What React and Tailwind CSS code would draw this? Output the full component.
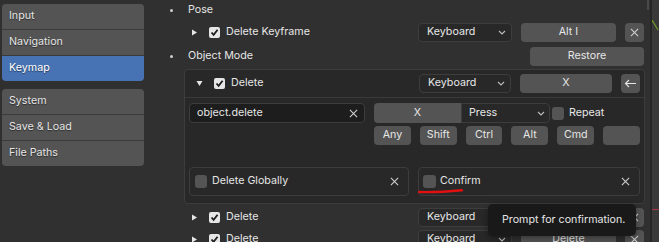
import React from 'react';

const Cross = ({ size = 9 }) => (
  <svg width={size} height={size} viewBox="0 0 10 10" className="shrink-0">
    <path d="M1 1 L9 9 M9 1 L1 9" stroke="#d0d0d0" strokeWidth="1.2" fill="none" />
  </svg>
);

const Chevron = () => (
  <svg width="8" height="5" viewBox="0 0 8 5" className="shrink-0">
    <path d="M1 1 L4 4 L7 1" stroke="#bdbdbd" strokeWidth="1.1" fill="none" />
  </svg>
);

const Check = () => (
  <div className="w-[11px] h-[11px] rounded-[2px] bg-[#e6e6e6] flex items-center justify-center shrink-0">
    <svg width="9" height="9" viewBox="0 0 9 9">
      <path d="M1.5 4.5 L3.6 6.8 L7.6 1.8" stroke="#1c1c1c" strokeWidth="1.8" fill="none" />
    </svg>
  </div>
);

const Tri = ({ down }) => (
  <svg width="7" height="7" viewBox="0 0 7 7" className="shrink-0">
    {down ? <path d="M0.5 1 L6.5 1 L3.5 6 Z" fill="#e6e6e6" /> : <path d="M1 0.5 L6 3.5 L1 6.5 Z" fill="#e6e6e6" />}
  </svg>
);

const Btn = ({ w, children, className = '' }) => (
  <div className={`h-[19px] rounded-[4px] bg-[#545454] flex items-center justify-center shrink-0 ${className}`} style={{ width: w }}>{children}</div>
);

const Menu = ({ w, label }) => (
  <div className="h-[19px] rounded-[4px] bg-[#282828] border border-[#3d3d3d] flex items-center justify-between pl-[8px] pr-[5px] shrink-0" style={{ width: w }}>
    <span>{label}</span><Chevron />
  </div>
);

const Dot = () => <div className="w-[3px] h-[3px] rounded-full bg-[#cfcfcf] ml-[10px] mr-[15px] shrink-0" />;

const ItemRow = ({ label, mid, className = '' }) => (
  <div className={`h-[20px] shrink-0 flex items-center ${className}`}>
    <div className="flex-1 flex items-center pl-[31px]">
      <Tri />
      <div className="ml-[11px]"><Check /></div>
      <span className="ml-[6px]">{label}</span>
    </div>
    <Menu w={94} label="Keyboard" />
    <Btn w={95} className="ml-[9px]">{mid}</Btn>
    <Btn w={19} className="ml-[9px]"><Cross /></Btn>
  </div>
);

const side1 = ['Input', 'Navigation', 'Keymap'];
const side2 = ['System', 'Save & Load', 'File Paths'];

const SideGroup = ({ items, active }) => (
  <div className="w-[142px] rounded-[4px] overflow-hidden flex flex-col gap-[1px] bg-[#3a3a3a]">
    {items.map(t => (
      <div key={t} className={`h-[25px] flex items-center pl-[7px] [text-shadow:0_1px_1px_rgba(0,0,0,0.5)] ${t === active ? 'bg-[#4772b3] text-white' : 'bg-[#545454]'}`}>{t}</div>
    ))}
  </div>
);

export default function App() {
  return (
    <div className="w-[659px] h-[242px] overflow-hidden bg-[#303030] flex relative text-[10.7px] leading-none text-[#e6e6e6] font-['Inter','DejaVu_Sans',sans-serif]">
      <div className="w-[160px] pl-[2px] pt-[4px] flex flex-col gap-[8px] shrink-0">
        <SideGroup items={side1} active="Keymap" />
        <SideGroup items={side2} />
      </div>

      <div className="w-[485px] shrink-0 flex flex-col">
        <div className="h-[20px] shrink-0 flex items-center pr-[1px]"><Dot /><span>Pose</span></div>
        <ItemRow label="Delete Keyframe" mid="Alt I" className="mt-[2px] pr-[1px]" />
        <div className="h-[19px] shrink-0 mt-[5px] flex items-center pr-[1px]">
          <Dot /><span className="flex-1">Object Mode</span>
          <Btn w={114}>Restore</Btn>
        </div>

        <div className="shrink-0 mt-[3px] ml-[24px] w-[461px] h-[135px] rounded-[4px] border border-[#3d3d3d] bg-[#282828] flex flex-col">
          <div className="h-[28px] shrink-0 border-b border-[#3a3a3a] flex items-center pr-[4px]">
            <div className="flex-1 flex items-center pl-[11px]">
              <Tri down />
              <div className="ml-[11px]"><Check /></div>
              <span className="ml-[6px]">Delete</span>
            </div>
            <Menu w={92} label="Keyboard" />
            <Btn w={92} className="ml-[9px]">X</Btn>
            <Btn w={19} className="ml-[9px]">
              <svg width="13" height="9" viewBox="0 0 13 9"><path d="M12 4.5 H1.5 M5 1 L1.5 4.5 L5 8" stroke="#e6e6e6" strokeWidth="1.1" fill="none" /></svg>
            </Btn>
          </div>

          <div className="flex-1 px-[4px] pt-[5px] flex flex-col">
            <div className="flex gap-[9px]">
              <div className="w-[176px] h-[20px] rounded-[4px] bg-[#1d1d1d] border border-[#3d3d3d] flex items-center justify-between pl-[7px] pr-[6px]">
                <span>object.delete</span><Cross />
              </div>
              <div className="flex-1 flex flex-col gap-[3px]">
                <div className="h-[20px] flex items-center">
                  <div className="w-[176px] h-[20px] flex rounded-[4px] overflow-hidden">
                    <div className="w-[87px] bg-[#545454] flex items-center justify-center">X</div>
                    <div className="flex-1 bg-[#282828] border border-[#3d3d3d] rounded-r-[4px] flex items-center justify-between pl-[7px] pr-[4px]">
                      <span>Press</span><Chevron />
                    </div>
                  </div>
                  <div className="ml-[2px] w-[12px] h-[13px] rounded-[3px] bg-[#545454]" />
                  <span className="ml-[5px]">Repeat</span>
                </div>
                <div className="grid grid-cols-6 gap-[9px]">
                  {['Any', 'Shift', 'Ctrl', 'Alt', 'Cmd', ''].map((m, i) => (
                    <div key={i} className="h-[19px] rounded-[4px] bg-[#545454] flex items-center justify-center">{m}</div>
                  ))}
                </div>
              </div>
            </div>

            <div className="mt-[22px] flex gap-[9px] relative">
              <div className="w-[220px] h-[29px] rounded-[4px] border border-[#3d3d3d] bg-[#282828] flex items-center pl-[5px] pr-[9px]">
                <div className="w-[12px] h-[13px] rounded-[3px] bg-[#545454]" />
                <span className="ml-[5px] flex-1">Delete Globally</span><Cross />
              </div>
              <div className="flex-1 h-[29px] rounded-[4px] border border-[#3d3d3d] bg-[#282828] flex items-center pl-[4px] pr-[9px]">
                <div className="w-[13px] h-[13px] rounded-[3px] bg-[#545454]" />
                <span className="ml-[4px] flex-1">Confirm</span><Cross />
              </div>
              <svg className="absolute left-[229px] top-[21px]" width="46" height="6" viewBox="0 0 46 6">
                <path d="M1 4 Q20 4.5 44 2.2" stroke="#e01010" strokeWidth="2.4" strokeLinecap="round" fill="none" />
              </svg>
            </div>
          </div>
        </div>

        <ItemRow label="Delete" mid="" className="mt-[3px] pr-[1px]" />
        <ItemRow label="Delete" mid="Delete" className="mt-[2px] pr-[1px]" />
      </div>

      <div className="w-[5px] shrink-0 pl-[2px]">
        <div className="w-[2px] h-[10px] bg-[#4a4a4a] rounded-full" />
      </div>
      <div className="w-[2px] shrink-0 bg-[#262626]" />
      <div className="flex-1 bg-[#393939]">
        <svg width="8" height="242" viewBox="0 0 8 242" className="block">
          <path d="M0 20 L6 30" stroke="#6e9a2a" strokeWidth="1.2" fill="none" />
          <path d="M0 209.5 H8" stroke="#9a3a42" strokeWidth="1.2" fill="none" />
        </svg>
      </div>

      <div className="absolute left-[488px] top-[204px] w-[148px] h-[32px] rounded-[5px] bg-[#191919] flex items-center pl-[14px] shadow-[0_2px_6px_rgba(0,0,0,0.4)]">
        Prompt for confirmation.
      </div>
    </div>
  );
}
